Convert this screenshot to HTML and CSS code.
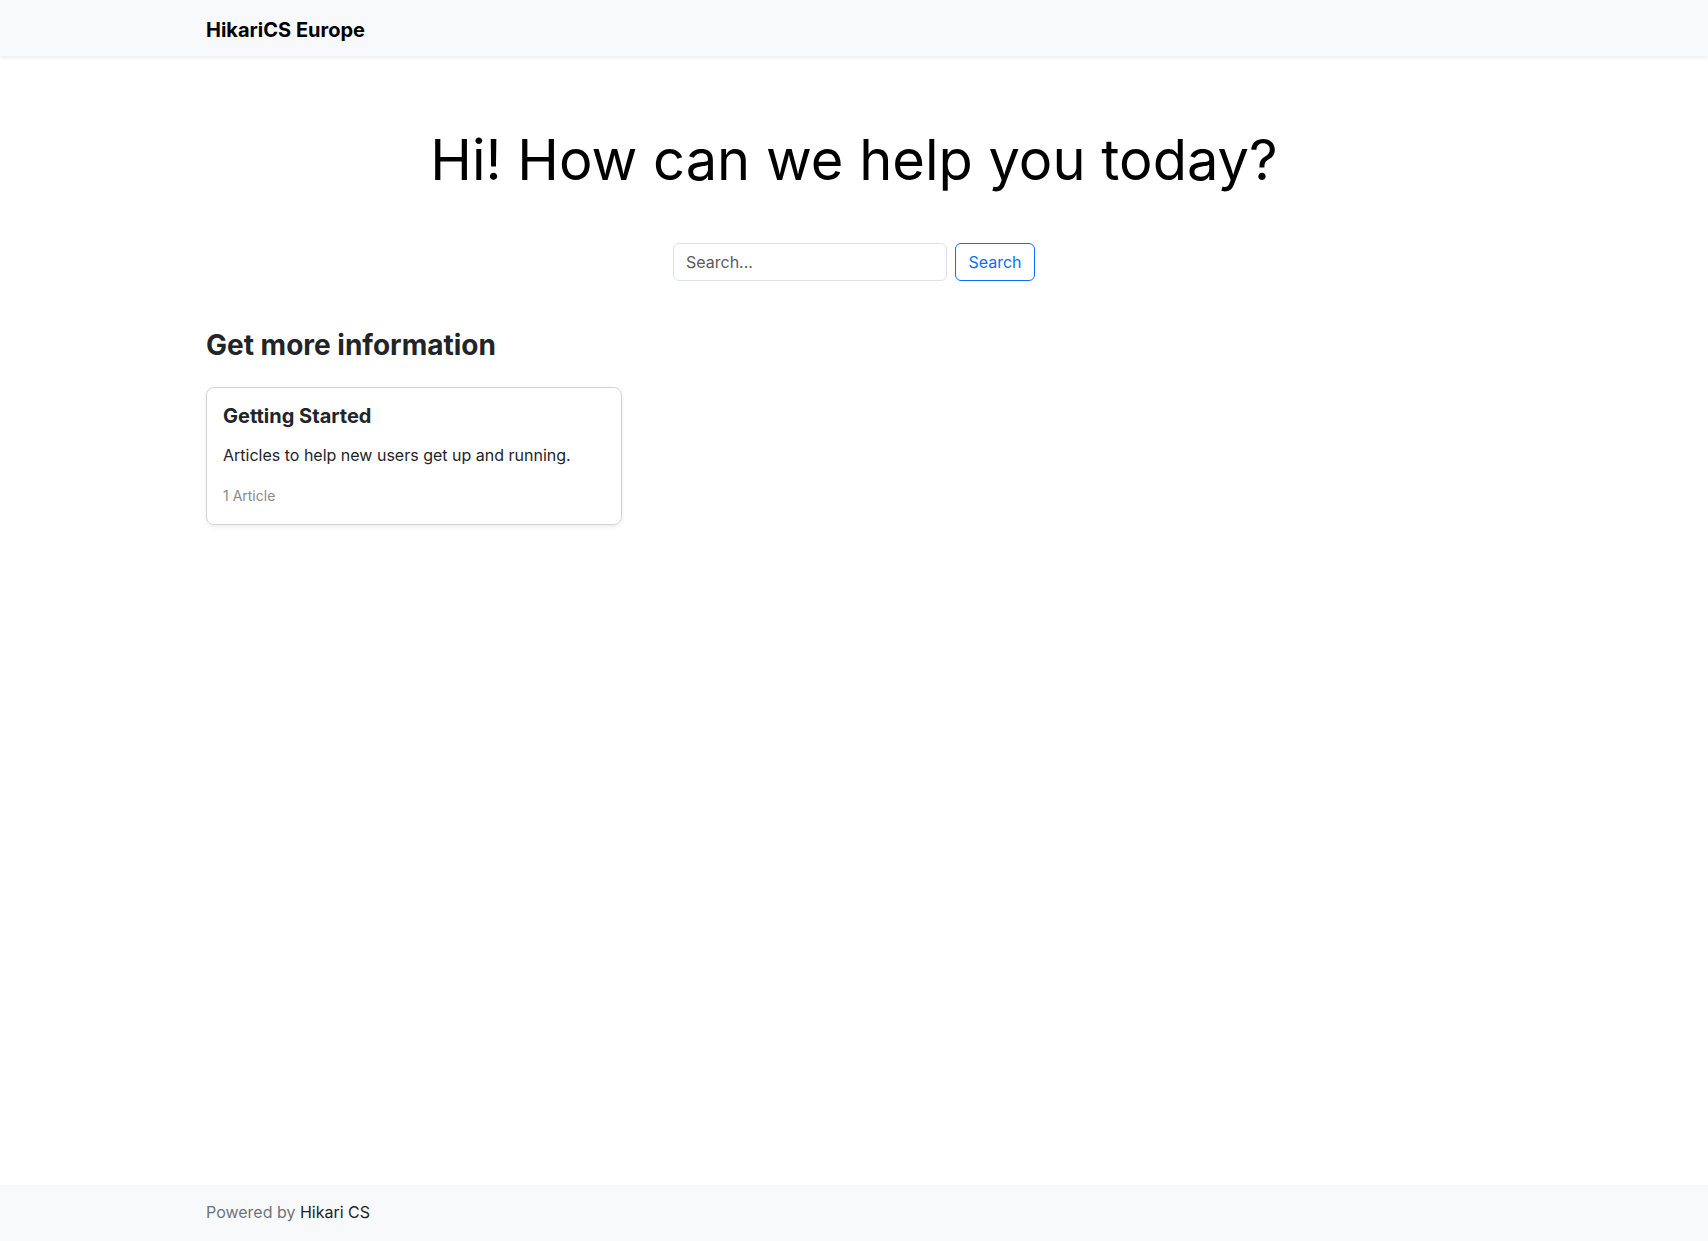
FILE: index.html
```html
<!DOCTYPE html>
<html lang="en">
<head>
<meta charset="utf-8">
<title>HikariCS Europe</title>
<link rel="stylesheet" href="styles.css">
</head>
<body>
<header class="navbar">
  <div class="container">
    <a class="brand" href="#">HikariCS Europe</a>
  </div>
</header>
<main class="main">
  <div class="container">
    <h1 class="hero-title">Hi! How can we help you today?</h1>
    <form class="search-form">
      <input class="search-input" type="text" placeholder="Search...">
      <button class="search-btn" type="button">Search</button>
    </form>
    <h2 class="section-title">Get more information</h2>
    <div class="grid">
      <div class="card">
        <h3 class="card-title">Getting Started</h3>
        <p class="card-text">Articles to help new users get up and running.</p>
        <div class="card-meta">1 Article</div>
      </div>
    </div>
  </div>
</main>
<footer class="footer">
  <div class="container">
    <span class="muted">Powered by</span> <a class="footer-link" href="#">Hikari CS</a>
  </div>
</footer>
</body>
</html>
```
FILE: styles.css
```css
* { box-sizing: border-box; }
html, body { margin: 0; padding: 0; }
body {
  font-family: Inter, "Noto Sans", sans-serif;
  font-size: 16px;
  line-height: 1.5;
  color: #212529;
  background: #fff;
  min-height: 100vh;
  display: flex;
  flex-direction: column;
}
.container {
  width: 1320px;
  margin: 0 auto;
  padding: 0 12px;
}
.navbar {
  background: #f8f9fa;
  height: 56px;
  display: flex;
  align-items: center;
  box-shadow: 0 2px 4px rgba(0,0,0,0.075);
  position: relative;
  z-index: 1;
}
.brand {
  display: inline-block;
  padding-top: 4px;
  font-size: 20px;
  font-weight: 700;
  color: #000;
  text-decoration: none;
  line-height: 1.5;
}
.main { flex: 1; }
.hero-title {
  margin: 71px 0 0;
  font-size: 56px;
  font-weight: 400;
  line-height: 1.2;
  text-align: center;
  color: #000;
}
.search-form {
  display: flex;
  justify-content: center;
  gap: 8px;
  margin-top: 49px;
}
.search-input {
  width: 274px;
  height: 38px;
  padding: 6px 12px;
  font: inherit;
  font-size: 16px;
  color: #212529;
  border: 1px solid #dee2e6;
  border-radius: 6px;
  outline: none;
}
.search-input::placeholder { color: #595c5f; }
.search-btn {
  width: 80px;
  height: 38px;
  padding: 6px 12px;
  font: inherit;
  font-size: 16px;
  color: #0d6efd;
  background: #fff;
  border: 1px solid #0d6efd;
  border-radius: 6px;
}
.section-title {
  margin: 48px 0 0;
  font-size: 28px;
  font-weight: 700;
  line-height: 1.2;
}
.grid {
  display: grid;
  grid-template-columns: repeat(3, 1fr);
  column-gap: 24px;
  margin-top: 24px;
}
.card {
  border: 1px solid #d3d3d3;
  border-radius: 8px;
  padding: 16px 16px 18px;
  box-shadow: 0 2px 4px rgba(0,0,0,0.075);
}
.card-title {
  margin: 0 0 15px;
  font-size: 20px;
  font-weight: 700;
  line-height: 1.2;
}
.card-text {
  margin: 0 0 18px;
  font-size: 16px;
}
.card-meta {
  font-size: 14px;
  color: #8a8a8a;
}
.footer {
  background: #f8f9fa;
  height: 56px;
  display: flex;
  align-items: center;
}
.footer .container { padding-bottom: 2px; }
.muted { color: #6c757d; }
.footer-link { color: #212529; text-decoration: none; }
```
